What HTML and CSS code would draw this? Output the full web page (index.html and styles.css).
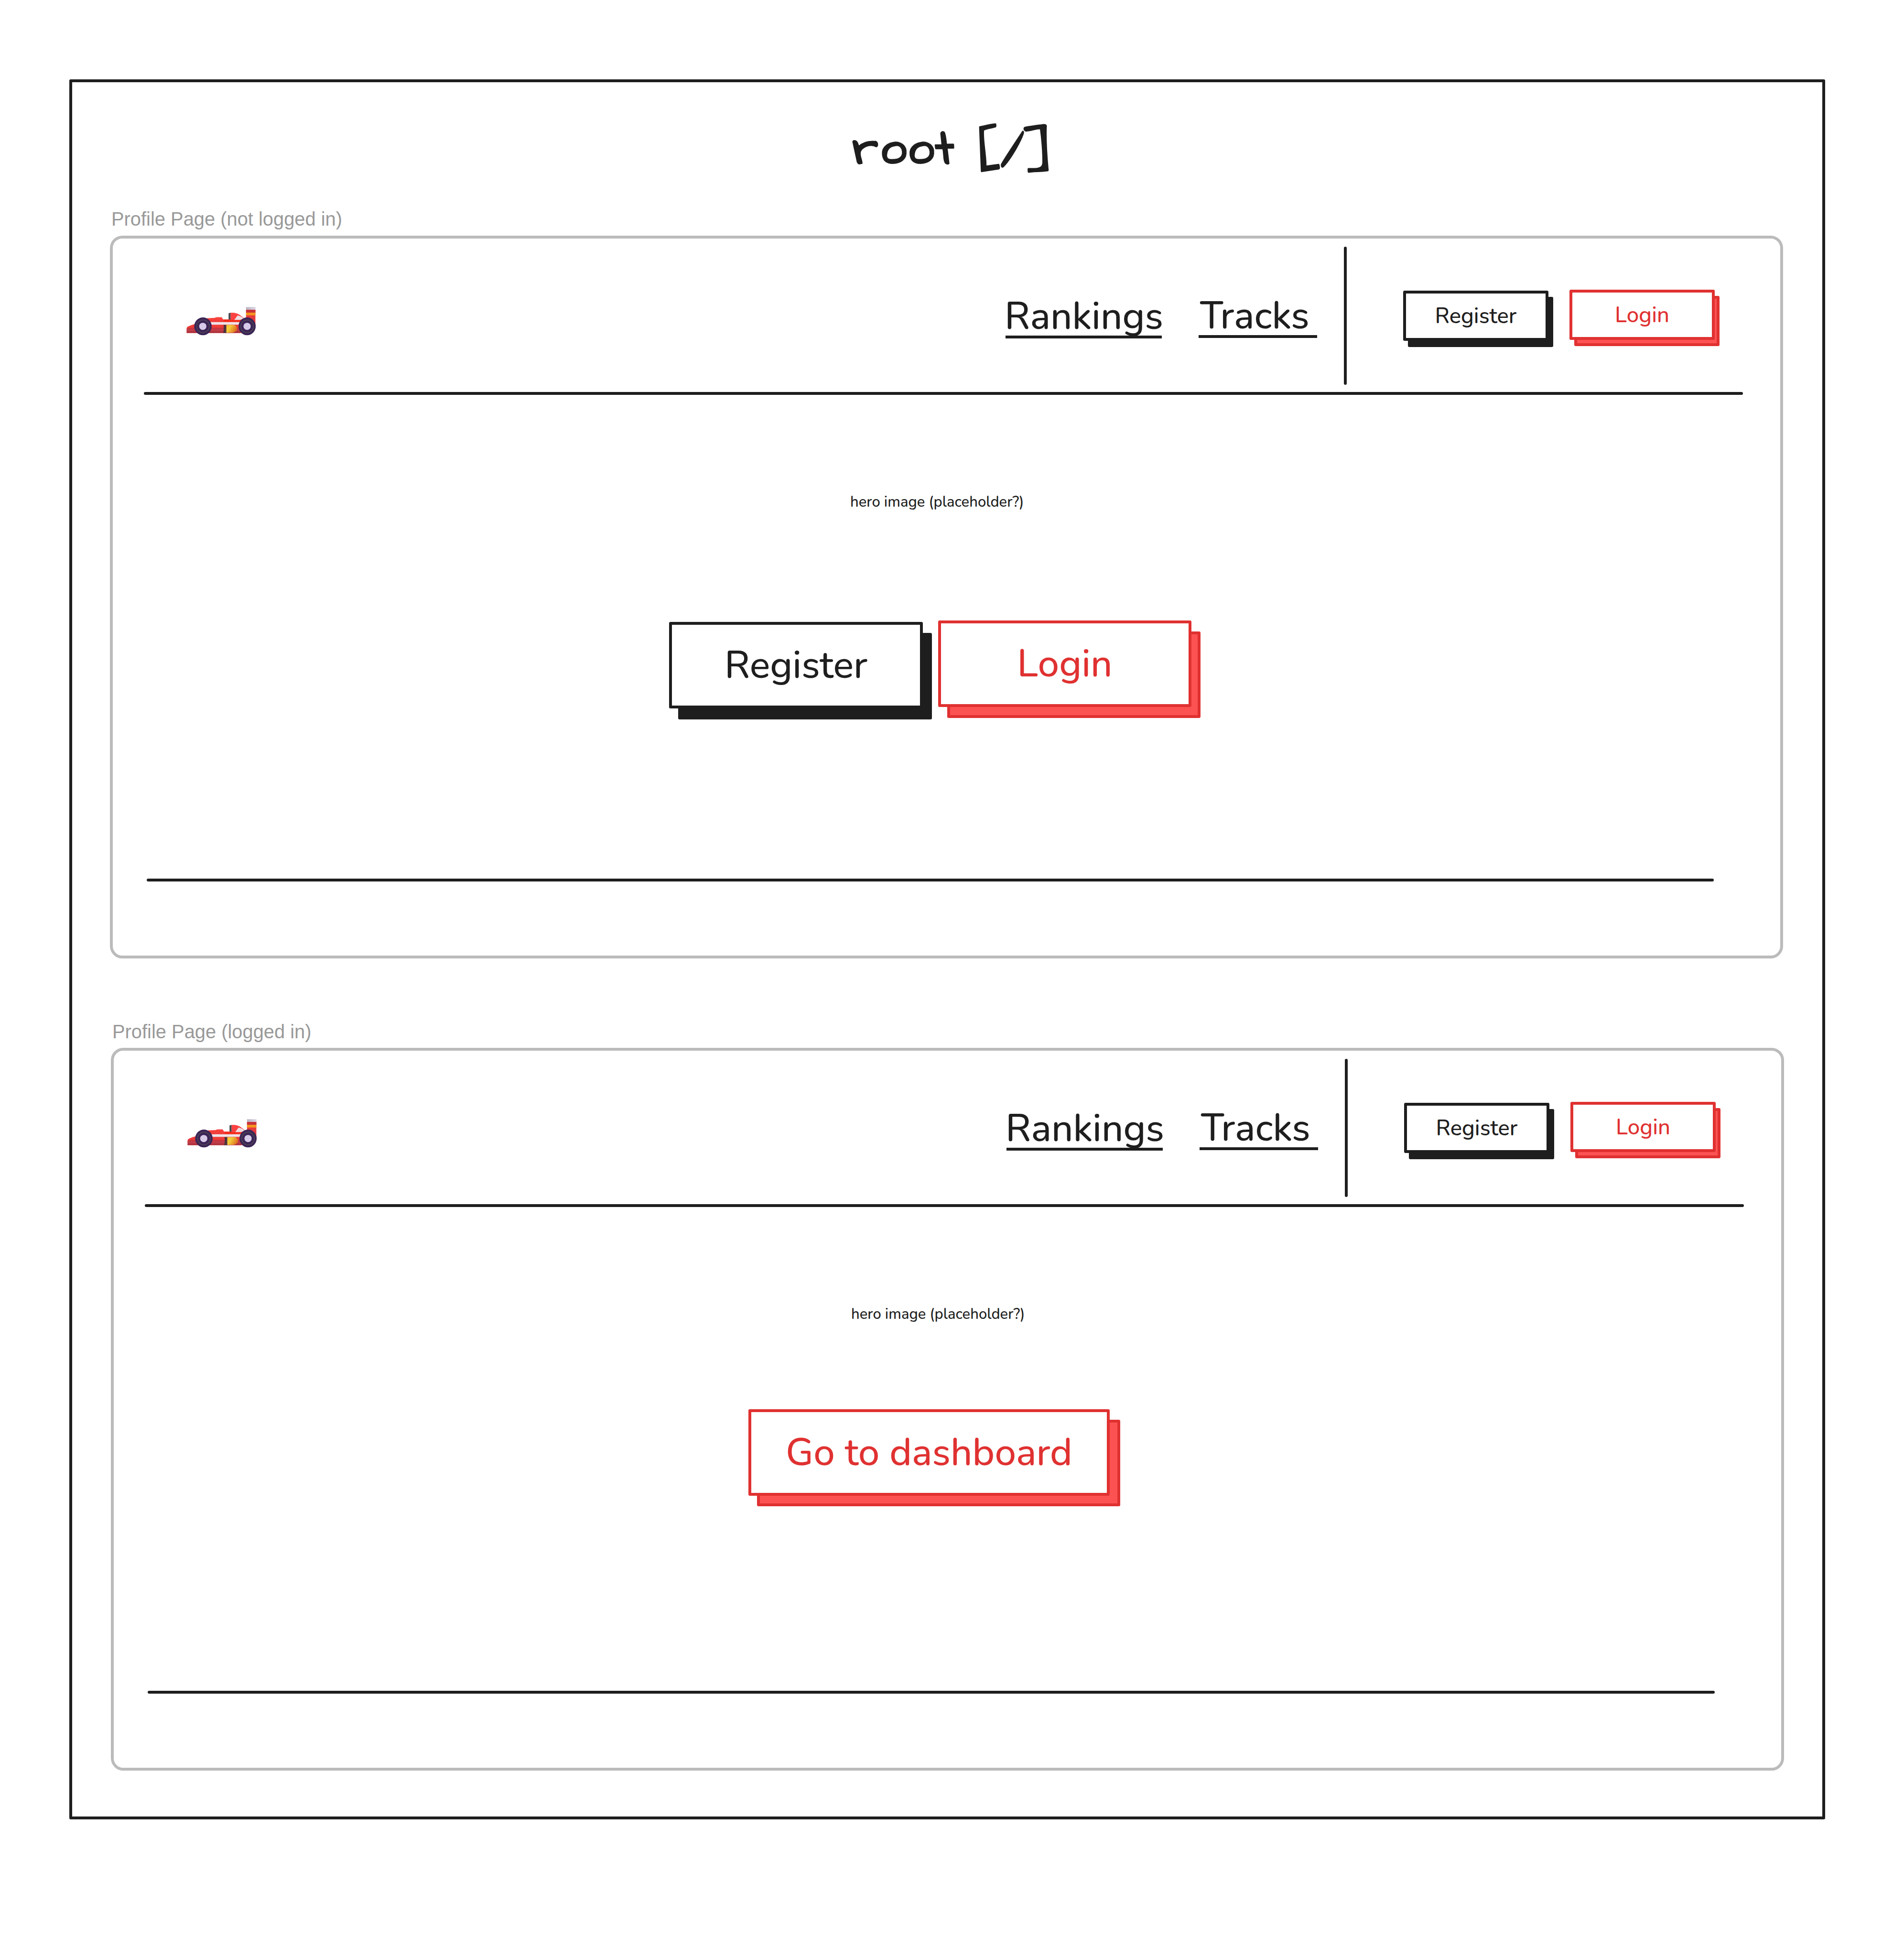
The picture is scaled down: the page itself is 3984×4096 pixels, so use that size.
FILE: index.html
```html
<!DOCTYPE html>
<html lang="en">
<head>
<meta charset="utf-8">
<title>root [/]</title>
<link rel="stylesheet" href="styles.css">
</head>
<body>
<svg class="defs" width="0" height="0" aria-hidden="true">
  <defs>
    <linearGradient id="gold" x1="0" y1="0" x2="1" y2="0.4"><stop offset="0" stop-color="#f6b92e"/><stop offset=".35" stop-color="#f3cf3c"/><stop offset="1" stop-color="#e0721f"/></linearGradient>
    <linearGradient id="skirt" x1="0" y1="0" x2="0" y2="1"><stop offset="0" stop-color="#c8323c"/><stop offset=".55" stop-color="#bf3f4a"/><stop offset="1" stop-color="#a32632"/></linearGradient>
    <linearGradient id="deck" x1="0" y1="0" x2="0" y2="1"><stop offset="0" stop-color="#fb4440"/><stop offset="1" stop-color="#ee3a34"/></linearGradient>
    <linearGradient id="wing" x1="0" y1="0" x2="1" y2="0"><stop offset="0" stop-color="#b9b2c0"/><stop offset="1" stop-color="#dcd6e4"/></linearGradient>
    <symbol id="car" viewBox="89 107 466 193">
      <path d="M488 128H550V240H488z" fill="#e53b3e"/>
      <path d="M488 128H550V148H488z" fill="#c93238"/>
      <path d="M488 111H551V129H488z" fill="url(#wing)"/>
      <path d="M488 148H550V166H488z" fill="#f5951f"/>
      <path d="M94 283V250Q96 241 106 238L130 229L160 222H470V283z" fill="#ee3d38"/>
      <path d="M94 283V256Q98 248 110 248H450V283z" fill="url(#skirt)"/>
      <path d="M225 212V187Q232 184 280 183Q284 178 296 178H326L336 193H372L480 186V212z" fill="url(#deck)"/>
      <path d="M340 194H470V212H340z" fill="#f32d1c"/>
      <path d="M372 155Q374 149 386 149V194H372z" fill="#4b464d"/>
      <path d="M386 149H408Q436 153 456 171L474 184V196H386z" fill="#fb4241"/>
      <path d="M432 166Q458 172 476 188L446 196H410z" fill="#eddfe2"/>
      <path d="M245 211H460V228H252z" fill="#efe4e8"/>
      <path d="M338 230H358V283H336Q344 256 338 230z" fill="#4a3440"/>
      <path d="M357 230H412Q432 246 428 260Q422 276 400 281H357z" fill="url(#gold)"/>
      <ellipse cx="202" cy="239" rx="58" ry="59" fill="#3b2456"/>
      <ellipse cx="202" cy="239" rx="42" ry="42" fill="none" stroke="#4b4256" stroke-width="7"/>
      <ellipse cx="201" cy="239" rx="24" ry="24" fill="#d6cae8"/>
      <ellipse cx="495" cy="239" rx="57" ry="59" fill="#3b2456"/>
      <ellipse cx="495" cy="239" rx="42" ry="42" fill="none" stroke="#4b4256" stroke-width="7"/>
      <ellipse cx="495" cy="239" rx="24" ry="24" fill="#d6cae8"/>
    </symbol>
  </defs>
</svg>

<main class="board">
  <h1 class="title">
    <svg class="title-art" viewBox="1840 240 500 170" role="img" aria-label="root [/]">
      <text class="hand hand-word" x="1846" y="359" transform="skewX(6)">root</text>
      <text class="hand hand-path" x="2321" y="368" text-anchor="end">[/]</text>
    </svg>
  </h1>

  <section class="screen">
    <h2 class="label">Profile Page (not logged in)</h2>
    <div class="panel">
      <header class="nav">
        <svg class="logo"><use href="#car"/></svg>
        <a class="link link-rankings">Rankings</a>
        <a class="link link-tracks">Tracks</a>
        <span class="divider"></span>
        <a class="btn btn-sm dark"><span>Register</span></a>
        <a class="btn btn-sm red"><span>Login</span></a>
      </header>
      <div class="rule rule-top"></div>
      <div class="hero">
        <p class="note">hero image (placeholder?)</p>
        <div class="actions">
          <a class="btn btn-lg dark"><span>Register</span></a>
          <a class="btn btn-lg red"><span>Login</span></a>
        </div>
      </div>
      <div class="rule rule-bottom"></div>
    </div>
  </section>

  <section class="screen screen-in">
    <h2 class="label">Profile Page (logged in)</h2>
    <div class="panel">
      <header class="nav">
        <svg class="logo"><use href="#car"/></svg>
        <a class="link link-rankings">Rankings</a>
        <a class="link link-tracks">Tracks</a>
        <span class="divider"></span>
        <a class="btn btn-sm dark"><span>Register</span></a>
        <a class="btn btn-sm red"><span>Login</span></a>
      </header>
      <div class="rule rule-top"></div>
      <div class="hero">
        <p class="note">hero image (placeholder?)</p>
        <div class="actions actions-single">
          <a class="btn btn-lg btn-wide red"><span>Go to dashboard</span></a>
        </div>
      </div>
      <div class="rule rule-bottom"></div>
    </div>
  </section>
</main>
</body>
</html>
```
FILE: styles.css
```css
*, *::before { box-sizing: border-box; }

html, body {
  margin: 0;
  background: #fff;
}

body {
  width: 3984px;
  height: 4096px;
  padding: 166px 0 0 145px;
  overflow: hidden;
  color: #1e1e1e;
  font-family: Nunito, "Noto Sans", sans-serif;
  font-weight: 500;
}

.defs { position: absolute; }

.board {
  width: 3674px;
  height: 3640px;
  border: 6px solid #1e1e1e;
  border-radius: 3px;
}

.title {
  height: 261px;
  margin: 0;
  padding: 56px 0 0 1595px;
  font-size: 80px;
}

.title-art {
  display: block;
  width: 474.5px;
  height: 161.3px;
  overflow: visible;
}

.hand {
  font-family: Excalifont, "Architects Daughter", "DejaVu Sans", sans-serif;
  font-weight: 400;
  fill: #1e1e1e;
  stroke: #1e1e1e;
  stroke-width: 4;
  stroke-linejoin: round;
  stroke-linecap: round;
}

.hand-word { font-size: 103px; letter-spacing: 3px; }
.hand-path { font-size: 115px; }

.screen { padding-left: 79px; }
.screen-in { padding: 128px 0 0 81px; }

.label {
  height: 60px;
  margin: 0;
  padding-left: 3px;
  color: #999;
  font: 400 39.86px/51px "Liberation Sans", Arial, sans-serif;
}

.screen-in .label { height: 59px; }

.panel {
  width: 3501px;
  height: 1512px;
  border: 6px solid #bbb;
  border-radius: 26px;
}

.nav {
  display: flex;
  align-items: flex-start;
  height: 321px;
  padding-left: 65px;
}

.logo {
  width: 147px;
  height: 61px;
  margin: 142px 1567px 0 88px;
}

.link {
  padding-top: 10px;
  border-bottom: 6px solid #1e1e1e;
  font-size: 79.72px;
  white-space: nowrap;
}

.link-rankings {
  width: 327px;
  margin: 113px 77px 0 1px;
  line-height: 80px;
  text-indent: -2px;
}

.link-tracks {
  width: 248px;
  margin: 111px 56px 0 0;
  line-height: 81px;
  text-indent: 3px;
}

.divider {
  width: 6px;
  height: 289px;
  margin: 17px 118px 0 0;
  border-radius: 3px;
  background: #1e1e1e;
}

.btn {
  position: relative;
  z-index: 0;
  flex: none;
  display: flex;
  white-space: nowrap;
}

.btn::before {
  content: "";
  position: absolute;
  z-index: -1;
  width: 100%;
  height: 100%;
  border: 6px solid;
  border-radius: 3px;
}

.btn span {
  flex: 1;
  display: flex;
  align-items: center;
  justify-content: center;
  border: 6px solid;
  border-radius: 3px;
  background: #fff;
}

.dark { color: #1e1e1e; }
.dark::before { background: #1e1e1e; }
.red { color: #e03131; }
.red::before { background: #fc5252; }

.btn-sm {
  width: 304px;
  height: 105px;
  margin-top: 109px;
  font-size: 45.55px;
}

.btn-sm::before { left: 10px; top: 13px; }
.btn-sm.red { margin: 107px 0 0 44px; }

.btn-lg {
  width: 531px;
  height: 181px;
  font-size: 79.72px;
}

.btn-lg::before { left: 19px; top: 23px; }
.btn-lg.red { width: 530px; margin-top: -3px; }

.btn-lg.btn-wide { width: 756px; margin-top: 0; }
.btn-wide::before { left: 18px; top: 22px; width: 760px; }

.rule {
  height: 6px;
  border-radius: 3px;
  background: #1e1e1e;
}

.rule-top { width: 3346px; margin-left: 65px; }
.rule-bottom { width: 3279px; margin-left: 71px; }

.hero {
  height: 1012px;
  padding-top: 204px;
}

.note {
  margin: 0 0 0 1543px;
  font-size: 31px;
  line-height: 40px;
}

.actions {
  display: flex;
  align-items: flex-start;
  gap: 32px;
  margin: 231px 0 0 1164px;
}

.actions-single { margin: 179px 0 0 1328px; }
```
